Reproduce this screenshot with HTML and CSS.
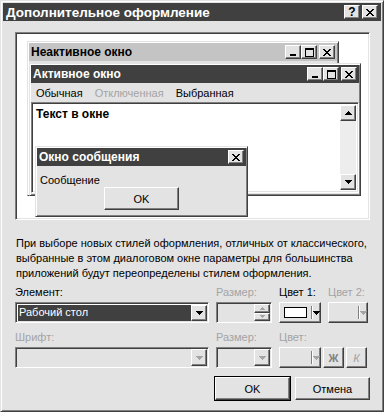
FILE: index.html
```html
<!DOCTYPE html>
<html lang="ru">
<head>
<meta charset="utf-8">
<title>Дополнительное оформление</title>
<link rel="stylesheet" href="styles.css">
</head>
<body>
<div class="dialog">
  <div class="titlebar">
    <span class="title">Дополнительное оформление</span>
    <div class="tb-btns">
      <span class="cbtn raised help">?</span>
      <span class="cbtn raised"><svg width="8" height="7" viewBox="0 0 8 7"><path d="M0 0h2v1H0zM6 0h2v1H6zM1 1h2v1H1zM5 1h2v1H5zM2 2h4v1H2zM3 3h2v1H3zM2 4h4v1H2zM1 5h2v1H1zM5 5h2v1H5zM0 6h2v1H0zM6 6h2v1H6z"/></svg></span>
    </div>
  </div>

  <div class="content">
    <div class="preview sunken">
      <div class="win inactive">
        <div class="wtitle light">
          <span>Неактивное окно</span>
          <div class="wbtns">
            <span class="cbtn raised"><svg width="8" height="8" viewBox="0 0 8 8"><path d="M1 6h6v2H1z"/></svg></span>
            <span class="cbtn raised"><svg width="9" height="9" viewBox="0 0 9 9"><path fill-rule="evenodd" d="M0 0h9v9H0zM1 2v6h7V2z"/></svg></span>
            <span class="cbtn raised sep"><svg width="8" height="7" viewBox="0 0 8 7"><path d="M0 0h2v1H0zM6 0h2v1H6zM1 1h2v1H1zM5 1h2v1H5zM2 2h4v1H2zM3 3h2v1H3zM2 4h4v1H2zM1 5h2v1H1zM5 5h2v1H5zM0 6h2v1H0zM6 6h2v1H6z"/></svg></span>
          </div>
        </div>
      </div>

      <div class="win active">
        <div class="wtitle dark">
          <span>Активное окно</span>
          <div class="wbtns">
            <span class="cbtn raised"><svg width="8" height="8" viewBox="0 0 8 8"><path d="M1 6h6v2H1z"/></svg></span>
            <span class="cbtn raised"><svg width="9" height="9" viewBox="0 0 9 9"><path fill-rule="evenodd" d="M0 0h9v9H0zM1 2v6h7V2z"/></svg></span>
            <span class="cbtn raised sep"><svg width="8" height="7" viewBox="0 0 8 7"><path d="M0 0h2v1H0zM6 0h2v1H6zM1 1h2v1H1zM5 1h2v1H5zM2 2h4v1H2zM3 3h2v1H3zM2 4h4v1H2zM1 5h2v1H1zM5 5h2v1H5zM0 6h2v1H0zM6 6h2v1H6z"/></svg></span>
          </div>
        </div>
        <div class="menu">
          <span class="mi">Обычная</span>
          <span class="mi dis">Отключенная</span>
          <span class="mi">Выбранная</span>
        </div>
        <div class="textarea sunken">
          <div class="ta-text">Текст в окне</div>
          <div class="scroll">
            <span class="sbtn raised"><svg width="7" height="4" viewBox="0 0 7 4"><path d="M3 0h1v1H3zM2 1h3v1H2zM1 2h5v1H1zM0 3h7v1H0z"/></svg></span>
            <span class="track"></span>
            <span class="sbtn raised"><svg width="7" height="4" viewBox="0 0 7 4"><path d="M0 0h7v1H0zM1 1h5v1H1zM2 2h3v1H2zM3 3h1v1H3z"/></svg></span>
          </div>
        </div>
      </div>

      <div class="win msg">
        <div class="wtitle dark">
          <span>Окно сообщения</span>
          <div class="wbtns">
            <span class="cbtn raised"><svg width="8" height="7" viewBox="0 0 8 7"><path d="M0 0h2v1H0zM6 0h2v1H6zM1 1h2v1H1zM5 1h2v1H5zM2 2h4v1H2zM3 3h2v1H3zM2 4h4v1H2zM1 5h2v1H1zM5 5h2v1H5zM0 6h2v1H0zM6 6h2v1H6z"/></svg></span>
          </div>
        </div>
        <div class="msg-body">
          <span class="msg-text">Сообщение</span>
          <span class="btn raised msg-ok">OK</span>
        </div>
      </div>
    </div>

    <p class="info">При выборе новых стилей оформления, отличных от классического, выбранные в этом диалоговом окне параметры для большинства приложений будут переопределены стилем оформления.</p>

    <div class="form">
      <span class="lbl">Элемент:</span>
      <span class="lbl dis">Размер:</span>
      <span class="lbl">Цвет 1:</span>
      <span class="lbl dis">Цвет 2:</span>

      <div class="select sunken">
        <span class="sel-value">Рабочий стол</span>
        <span class="arrow-btn raised"><svg width="7" height="4" viewBox="0 0 7 4"><path d="M0 0h7v1H0zM1 1h5v1H1zM2 2h3v1H2zM3 3h1v1H3z"/></svg></span>
      </div>
      <div class="spinner sunken">
        <span class="spin-field"></span>
        <span class="spin-btns">
          <span class="spin raised"><svg width="5" height="3" viewBox="0 0 5 3"><path d="M2 0h1v1H2zM1 1h3v1H1zM0 2h5v1H0z"/></svg></span>
          <span class="spin raised"><svg width="5" height="3" viewBox="0 0 5 3"><path d="M0 0h5v1H0zM1 1h3v1H1zM2 2h1v1H2z"/></svg></span>
        </span>
      </div>
      <div class="colorbtn raised">
        <span class="swatch"></span>
        <span class="csep"></span>
        <span class="carrow"><svg width="7" height="4" viewBox="0 0 7 4"><path d="M0 0h7v1H0zM1 1h5v1H1zM2 2h3v1H2zM3 3h1v1H3z"/></svg></span>
      </div>
      <div class="colorbtn raised disabled">
        <span class="swatch empty"></span>
        <span class="csep"></span>
        <span class="carrow"><svg width="7" height="4" viewBox="0 0 7 4"><path d="M0 0h7v1H0zM1 1h5v1H1zM2 2h3v1H2zM3 3h1v1H3z"/></svg></span>
      </div>

      <span class="lbl dis row2">Шрифт:</span>
      <span class="lbl dis row2">Размер:</span>
      <span class="lbl dis row2">Цвет:</span>
      <span class="lbl row2"></span>

      <div class="select sunken disabled">
        <span class="sel-value empty"></span>
        <span class="arrow-btn raised"><svg width="7" height="4" viewBox="0 0 7 4"><path d="M0 0h7v1H0zM1 1h5v1H1zM2 2h3v1H2zM3 3h1v1H3z"/></svg></span>
      </div>
      <div class="select sunken disabled">
        <span class="sel-value empty"></span>
        <span class="arrow-btn raised"><svg width="7" height="4" viewBox="0 0 7 4"><path d="M0 0h7v1H0zM1 1h5v1H1zM2 2h3v1H2zM3 3h1v1H3z"/></svg></span>
      </div>
      <div class="colorbtn raised disabled">
        <span class="swatch empty"></span>
        <span class="csep"></span>
        <span class="carrow"><svg width="7" height="4" viewBox="0 0 7 4"><path d="M0 0h7v1H0zM1 1h5v1H1zM2 2h3v1H2zM3 3h1v1H3z"/></svg></span>
      </div>
      <div class="styles">
        <span class="sbtn2 raised bold">Ж</span>
        <span class="sbtn2 raised ital">К</span>
      </div>
    </div>

    <div class="actions">
      <span class="btn raised default">OK</span>
      <span class="btn raised">Отмена</span>
    </div>
  </div>
</div>
</body>
</html>
```

FILE: styles.css
```css
* { box-sizing: border-box; margin: 0; padding: 0; }

html, body {
  width: 384px;
  height: 412px;
  overflow: hidden;
  background: #e3e3e3;
}

body {
  font: 11px "Liberation Sans", Arial, sans-serif;
  color: #000;
}

.raised {
  background: #e3e3e3;
  border: 1px solid;
  border-color: #fff #404040 #404040 #fff;
  box-shadow: inset -1px -1px #808080, inset 1px 1px #e3e3e3;
}

.sunken {
  border: 1px solid;
  border-color: #808080 #fff #fff #808080;
  box-shadow: inset 1px 1px #404040, inset -1px -1px #e3e3e3;
}

.dialog {
  width: 384px;
  height: 412px;
  background: #e3e3e3;
  border: 1px solid;
  border-color: #e3e3e3 #404040 #404040 #e3e3e3;
  box-shadow: inset 1px 1px #fff, inset -1px -1px #808080;
  padding: 2px;
  display: flex;
  flex-direction: column;
}

.titlebar {
  height: 18px;
  background: #404040;
  color: #fff;
  display: flex;
  align-items: center;
  justify-content: space-between;
  padding: 0 3px 0 3px;
  font-weight: bold;
  font-size: 13.5px;
}

.tb-btns { display: flex; gap: 2px; }

.cbtn {
  width: 16px;
  height: 14px;
  display: flex;
  align-items: center;
  justify-content: center;
  color: #000;
}
.cbtn svg { display: block; fill: #000; shape-rendering: crispEdges; }
.help { font-weight: bold; font-size: 12px; line-height: 12px; }

.content {
  flex: 1;
  display: flex;
  flex-direction: column;
  padding: 0 11px 0 12px;
}

.preview {
  margin-top: 11px;
  height: 188px;
  background: #fff;
  position: relative;
}

.win {
  position: absolute;
  background: #e3e3e3;
  border: 1px solid;
  border-color: #e3e3e3 #404040 #404040 #e3e3e3;
  box-shadow: inset 1px 1px #fff, inset -1px -1px #808080;
  padding: 1px;
  display: flex;
  flex-direction: column;
}

.inactive { left: 11px; top: 8px; width: 312px; height: 155px; }
.active { left: 13px; top: 30px; width: 332px; height: 133px; }
.msg { left: 19px; top: 113px; width: 213px; height: 71px; }

.wtitle {
  height: 18px;
  flex: none;
  display: flex;
  align-items: center;
  justify-content: space-between;
  padding: 0 2px 0 2px;
  font-size: 12px;
  font-weight: bold;
}
.wtitle.light { background: #c4c4c4; color: #000; }
.wtitle.dark { background: #404040; color: #fff; }

.wbtns { display: flex; }
.wbtns .sep { margin-left: 2px; }

.menu {
  height: 19px;
  flex: none;
  display: flex;
  align-items: center;
  margin-left: -1px;
}
.mi { padding: 0 6px; }
.dis { color: #a4a4a4; }

.textarea {
  flex: 1;
  background: #fff;
  display: flex;
  padding: 2px;
  margin-bottom: 1px;
}
.ta-text {
  flex: 1;
  font-size: 12px;
  font-weight: bold;
  line-height: 14px;
  padding: 2px 0 0 2px;
}
.scroll {
  width: 16px;
  display: flex;
  flex-direction: column;
  background: #ededed;
}
.sbtn {
  width: 16px;
  height: 16px;
  display: flex;
  align-items: center;
  justify-content: center;
}
.sbtn svg, .arrow-btn svg, .spin svg, .carrow svg { display: block; fill: #000; shape-rendering: crispEdges; }
.track { flex: 1; }

.msg-body {
  flex: 1;
  display: flex;
  flex-direction: column;
  padding: 8px 3px 0 3px;
}
.msg-text { line-height: 13px; }
.msg-ok {
  align-self: center;
  width: 71px;
  height: 24px;
  display: flex;
  align-items: center;
  justify-content: center;
  margin-left: 0;
}

.info {
  margin-top: 16px;
  line-height: 15px;
  padding-left: 1px;
}

.form {
  margin-top: 5px;
  display: grid;
  grid-template-columns: 194px 56px 42px 40px;
  column-gap: 7px;
}
.lbl {
  line-height: 13px;
  margin-bottom: 3px;
  white-space: nowrap;
}
.lbl.row2 { margin-top: 8px; }

.select {
  height: 21px;
  background: #fff;
  display: flex;
  padding: 2px 1px 1px 1px;
}
.select.disabled { background: #e3e3e3; padding: 1px; }
.sel-value {
  flex: 1;
  background: #404040;
  color: #fff;
  line-height: 15px;
  padding-left: 1px;
  margin-left: 1px;
}
.sel-value.empty { background: transparent; }
.arrow-btn {
  width: 16px;
  display: flex;
  align-items: center;
  justify-content: center;
}
.disabled .arrow-btn svg, .disabled .carrow svg, .spin svg { fill: #a4a4a4; }

.spinner {
  height: 21px;
  background: #e3e3e3;
  display: flex;
  padding: 1px;
}
.spin-field { flex: 1; }
.spin-btns { width: 16px; display: flex; flex-direction: column; }
.spin {
  flex: 1;
  display: flex;
  align-items: center;
  justify-content: center;
}

.colorbtn {
  height: 21px;
  display: flex;
  align-items: center;
  padding: 0 0 0 4px;
}
.swatch {
  width: 23px;
  height: 11px;
  background: #fff;
  border: 1px solid #000;
}
.swatch.empty { background: transparent; border-color: transparent; }
.csep {
  width: 2px;
  height: 13px;
  margin-left: 4px;
  border-left: 1px solid #808080;
  border-right: 1px solid #fff;
}
.carrow {
  flex: 1;
  display: flex;
  justify-content: center;
}

.styles {
  display: flex;
  gap: 2px;
  margin-left: -5px;
}
.sbtn2 {
  width: 21px;
  height: 21px;
  display: flex;
  align-items: center;
  justify-content: center;
  color: #8c8c8c;
  font-size: 11px;
}
.sbtn2.bold { font-weight: bold; color: #808080; }
.sbtn2.ital { font-style: italic; color: #a4a4a4; }

.actions {
  margin-top: 9px;
  display: flex;
  justify-content: flex-end;
  gap: 5px;
}
.btn {
  width: 75px;
  height: 23px;
  display: flex;
  align-items: center;
  justify-content: center;
  font-weight: normal;
}
.btn.default {
  outline: 1px solid #000;
  outline-offset: 0;
}
```
